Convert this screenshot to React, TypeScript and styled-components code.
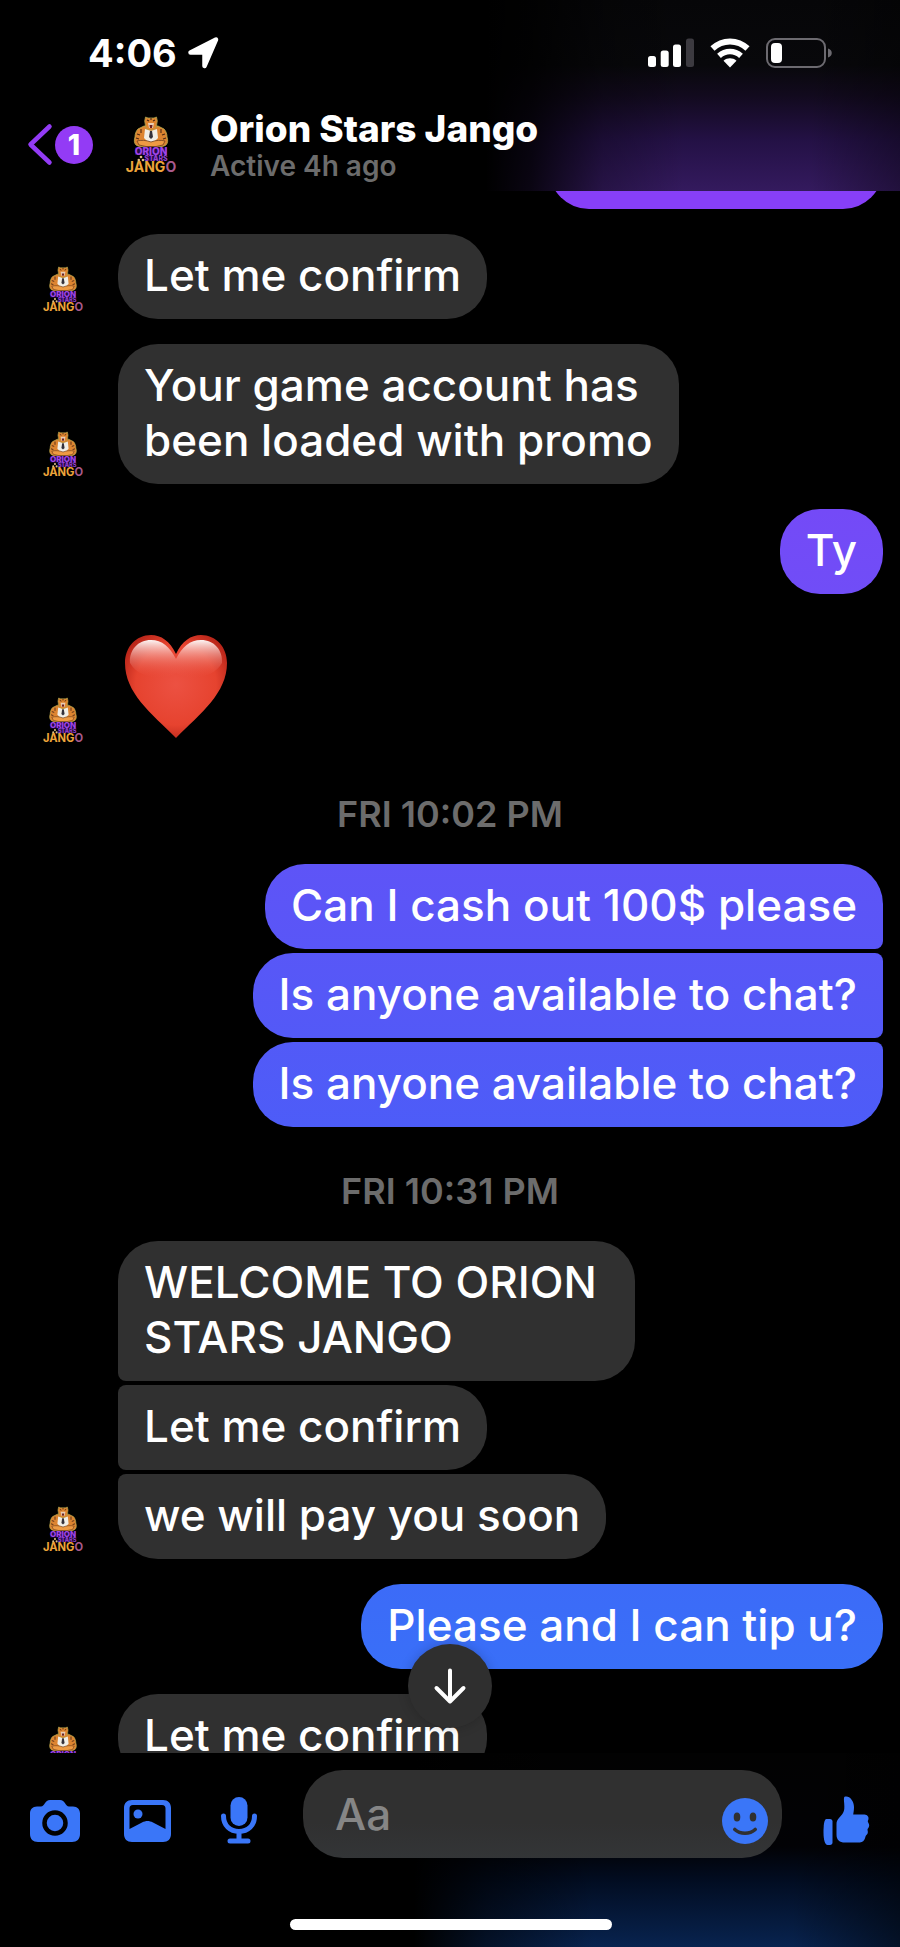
import React from "react";
import styled, { createGlobalStyle } from "styled-components";

const GlobalStyle = createGlobalStyle`
  * { box-sizing: border-box; }
  body {
    margin: 0;
    background: #000;
    color: #fff;
    font-family: Inter, "Liberation Sans", sans-serif;
  }
  button {
    border: 0;
    padding: 0;
    background: none;
    color: inherit;
    font: inherit;
    cursor: pointer;
  }
  svg { display: block; flex: none; overflow: visible; }
`;

const Screen = styled.div`
  display: flex;
  flex-direction: column;
  height: 100vh;
  overflow: hidden;
`;

const Header = styled.header`
  position: relative;
  z-index: 1;
  flex: none;
  background:
    linear-gradient(90deg, #000 54%, rgba(0, 0, 0, 0.8) 59%, rgba(0, 0, 0, 0.25) 67%, transparent 76%, transparent 90%, rgba(0, 0, 0, 0.35) 100%),
    linear-gradient(180deg, #060608 0%, #08080b 34%, #120a1e 50%, #241146 74%, #341a5e 100%);
`;

const StatusBar = styled.div`
  display: flex;
  align-items: center;
  justify-content: space-between;
  height: 106px;
  padding: 0 68px 0 88px;
`;

const StatusGroup = styled.div<{ $gap: number }>`
  display: flex;
  align-items: center;
  gap: ${(p) => p.$gap}px;
`;

const Clock = styled.time`
  font-size: 38px;
  line-height: 44px;
  font-weight: 700;
`;

const NavBar = styled.div`
  display: flex;
  align-items: center;
  height: 85px;
  padding: 0 24px 8px 28px;
`;

const BackButton = styled.button`
  display: flex;
  align-items: center;
  gap: 3px;
`;

const UnreadBadge = styled.span`
  width: 38px;
  height: 38px;
  border-radius: 50%;
  background: #933bf5;
  font-size: 28px;
  line-height: 38px;
  font-weight: 800;
  text-align: center;
`;

const Contact = styled.div`
  display: flex;
  align-items: center;
  gap: 34px;
  margin-left: 33px;
`;

const ContactName = styled.h1`
  margin: 0;
  font-size: 37px;
  line-height: 42px;
  font-weight: 800;
`;

const ContactStatus = styled.p`
  margin: 0;
  color: #6c6c6c;
  font-size: 28px;
  line-height: 32px;
  font-weight: 600;
`;

const Conversation = styled.main`
  position: relative;
  flex: 1;
  min-height: 0;
  overflow: hidden;
`;

const Thread = styled.div`
  display: flex;
  flex-direction: column;
  gap: 25px;
  margin-top: -67px;
  padding: 0 17px 0 43px;
`;

const Incoming = styled.div`
  display: flex;
  align-items: flex-end;
  gap: 35px;
`;

const AvatarSlot = styled.div`
  margin-bottom: 8px;
`;

const Stack = styled.div<{ $side: "left" | "right" }>`
  display: flex;
  flex-direction: column;
  align-items: ${(p) => (p.$side === "left" ? "flex-start" : "flex-end")};
  gap: 4px;
`;

type Place = "single" | "first" | "middle" | "last";

const corners = (side: "left" | "right", place: Place) => {
  const top = place === "middle" || place === "last" ? 8 : 40;
  const bottom = place === "middle" || place === "first" ? 8 : 40;
  return side === "left"
    ? `${top}px 40px 40px ${bottom}px`
    : `40px ${top}px ${bottom}px 40px`;
};

const Bubble = styled.p<{ $side: "left" | "right"; $place?: Place; $tone?: string }>`
  margin: 0;
  min-height: 85px;
  padding: 14px 26px 16px;
  border-radius: ${(p) => corners(p.$side, p.$place ?? "single")};
  background: ${(p) => p.$tone ?? "#303030"};
  font-size: 44px;
  line-height: 55px;
  font-weight: 500;
  white-space: pre-wrap;
`;

const ScrolledBubble = styled(Bubble)`
  width: 334px;
`;

const Reaction = styled.div`
  padding: 16px 0 12px 7px;
`;

const Timestamp = styled.time`
  padding: 17px 26px 3px 0;
  color: #6c6c6c;
  font-size: 36px;
  line-height: 44px;
  font-weight: 600;
  text-align: center;
`;

const JumpRow = styled.div`
  position: absolute;
  right: 0;
  bottom: 25px;
  left: 0;
  display: flex;
  justify-content: center;
`;

const JumpButton = styled.button`
  display: flex;
  align-items: center;
  justify-content: center;
  width: 84px;
  height: 84px;
  border-radius: 50%;
  background: #2f2f2f;
  box-shadow: 0 0 12px rgba(0, 0, 0, 0.2);
`;

const Footer = styled.footer`
  flex: none;
  padding: 17px 22px 17px 23px;
  background:
    linear-gradient(90deg, #000 46%, rgba(0, 0, 0, 0.5) 54%, transparent 66%, transparent 88%, rgba(0, 0, 0, 0.5) 100%),
    linear-gradient(180deg, #020202 0%, #020205 48%, #020d22 66%, #08234f 100%);
`;

const Composer = styled.form`
  display: flex;
  gap: 32px;
  height: 88px;
`;

const Tools = styled.div`
  display: flex;
  gap: 28px;
`;

const ToolButton = styled.button`
  display: flex;
  align-items: center;
  justify-content: center;
  width: 64px;
  padding-top: 13px;
  color: #3a76f8;
`;

const Field = styled.div`
  display: flex;
  flex: 1;
  min-width: 0;
  padding: 0 5px 0 32px;
  border-radius: 40px;
  background: linear-gradient(180deg, #303030 0%, #303030 60%, #333537 100%);
`;

const MessageInput = styled.input`
  flex: 1;
  min-width: 0;
  padding: 0;
  border: 0;
  outline: 0;
  background: none;
  color: #fff;
  font: 500 44px/88px Inter, "Liberation Sans", sans-serif;
  &::placeholder {
    color: #868686;
    opacity: 1;
  }
`;

const HomeIndicator = styled.div`
  width: 322px;
  max-width: 60%;
  height: 11px;
  margin: 61px auto 0;
  border-radius: 6px;
  background: #fff;
`;

function Mascot({ width, height }: { width: number; height: number }) {
  return (
    <svg width={width} height={height} viewBox="0 0 50 55" role="img" aria-label="Orion Stars Jango">
      <path d="M18 9l-6 3c-2 2-3 5-3 8-1 3-1 6 1 8 3 2 7 2 10 1h10c3 1 7 1 10-1 2-2 2-5 1-8 0-3-1-6-3-8l-6-3z" fill="#dd8430" stroke="#b9ad4f" strokeWidth=".8" />
      <path d="M19.500 0l2.500 1h6l2.500-1 .8 4-1 6-2.500 3h-5.600l-2.500-3-1-6z" fill="#e0852f" stroke="#a6a04c" strokeWidth=".8" />
      <path d="M21 3l2 1M29 3l-2 1M25 1v2M11 17l3 1M39 17l-3 1M10 21l3 1M40 21l-3 1M15 12v4M35 12v4" stroke="#4b2814" strokeWidth="1.100" />
      <path d="M22 6h6l-1 5h-4z" fill="#e9cdb4" />
      <path d="M23.500 8h3l-.5 3h-2z" fill="#6b2020" />
      <path d="M19 12l6 2 6-2 1 9-4 4h-6l-4-4z" fill="#f1eee6" />
      <path d="M24 14h2l1 6-2 2-2-2z" fill="#34323b" />
      <path d="M11 24c4-1 9-1 14 1 5-2 10-2 14-1l-2 4-7 1.500H20L13 28z" fill="#ee9a42" stroke="#70401e" strokeWidth=".8" />
      <path d="M9 30.500h32v7.500h-9v6H20v-6H9z" fill="#260a44" />
      <circle cx="15" cy="40" r="1.300" fill="#e0bd85" />
      <circle cx="12.800" cy="43" r="1.300" fill="#e0bd85" />
      <circle cx="17" cy="43" r="1.300" fill="#e0bd85" />
      <text fontWeight="800" textAnchor="middle">
        <tspan x="25" y="37.500" fontSize="10" fill="#a044ea">ORION</tspan>
        <tspan x="30" y="44" fontSize="7" fill="#9440d4">STARS</tspan>
        <tspan x="25" y="54.500" fontSize="14" fontWeight="700" fill="#eda43a">JANG</tspan>
        <tspan fontSize="14" fontWeight="700" fill="#a85a8d">O</tspan>
      </text>
    </svg>
  );
}

const SmallAvatar = () => (
  <AvatarSlot>
    <Mascot width={40} height={44} />
  </AvatarSlot>
);

const LocationIcon = () => (
  <svg width="32" height="32" viewBox="0 0 32 32" aria-hidden="true">
    <path d="M29 2.500L17.500 29V15.500H3.500z" fill="#fff" stroke="#fff" strokeWidth="4.500" strokeLinejoin="round" />
  </svg>
);

const SignalIcon = () => (
  <svg width="46" height="30" viewBox="0 0 46 30" aria-hidden="true">
    <rect x="0" y="18" width="8" height="11" rx="2.500" fill="#fff" />
    <rect x="12.700" y="12.500" width="8" height="16.500" rx="2.500" fill="#fff" />
    <rect x="25" y="6.500" width="8" height="22.500" rx="2.500" fill="#fff" />
    <rect x="38" y="0.500" width="8" height="28.500" rx="2.500" fill="#3c3a40" />
  </svg>
);

const WifiIcon = () => (
  <svg width="40" height="30" viewBox="0 0 40 30" aria-hidden="true">
    <path d="M2.500 10.500C12.500 1 27.500 1 37.500 10.500" fill="none" stroke="#fff" strokeWidth="6" />
    <path d="M9 17.800c6.500-5.800 15.500-5.800 22 0" fill="none" stroke="#fff" strokeWidth="5.600" />
    <path d="M20 29.500l-6.500-6.800c4-3.200 9-3.200 13 0z" fill="#fff" />
  </svg>
);

const BatteryIcon = () => (
  <svg width="66" height="30" viewBox="0 0 66 30" aria-hidden="true">
    <rect x="1" y="1" width="58" height="28" rx="8" fill="none" stroke="#6c6a70" strokeWidth="2" />
    <rect x="5" y="5" width="11" height="20" rx="4" fill="#fff" />
    <path d="M62 10.500c5 1.500 5 7.500 0 9z" fill="#6c6a70" />
  </svg>
);

const ChevronIcon = () => (
  <svg width="24" height="41" viewBox="0 0 24 41" aria-hidden="true">
    <path d="M21.500 2.500L2.500 20.500l19 18" fill="none" stroke="#933bf5" strokeWidth="4.500" strokeLinecap="round" strokeLinejoin="round" />
  </svg>
);

const HeartIcon = () => (
  <svg width="102" height="103" viewBox="0 0 102 103" role="img" aria-label="Red heart">
    <defs>
      <radialGradient id="heart-body" cx="50%" cy="48%" r="58%">
        <stop offset="0" stopColor="#ec5142" />
        <stop offset=".68" stopColor="#e6432f" />
        <stop offset="1" stopColor="#b82519" />
      </radialGradient>
      <linearGradient id="heart-shine" x1="0" y1="0" x2="0" y2="1">
        <stop offset="0" stopColor="#fff" stopOpacity=".95" />
        <stop offset=".5" stopColor="#f6aaa2" stopOpacity=".45" />
        <stop offset="1" stopColor="#ec5142" stopOpacity="0" />
      </linearGradient>
    </defs>
    <path d="M51 19C45 6 36 0 26 0 11 0 0 12 0 28c0 30 26 50 51 75 25-25 51-45 51-75C102 12 91 0 76 0 66 0 57 6 51 19z" fill="url(#heart-body)" />
    <path d="M26 5c11 0 19 7 25 19v14C38 46 14 44 5 28 4 15 13 5 26 5zM76 5c-11 0-19 7-25 19v14c13 8 37 6 46-10 1-13-8-23-21-23z" fill="url(#heart-shine)" />
  </svg>
);

const ArrowDownIcon = () => (
  <svg width="32" height="36" viewBox="0 0 32 36" aria-hidden="true">
    <path d="M16 2.500v30M2.500 20L16 33.500 29.500 20" fill="none" stroke="#fff" strokeWidth="4" strokeLinecap="round" strokeLinejoin="round" />
  </svg>
);

const CameraIcon = () => (
  <svg width="50" height="42" viewBox="0 0 50 42" aria-hidden="true">
    <path d="M7 6.500h4c3.500 0 4-6.500 9-6.500h10c5 0 5.500 6.500 9 6.500h4c4.500 0 7 3 7 7V34c0 5-3 8-8 8H8c-5 0-8-3-8-8V13.500c0-4 2.500-7 7-7z" fill="currentColor" />
    <circle cx="25" cy="23" r="10.500" fill="currentColor" stroke="#020202" strokeWidth="4.500" />
  </svg>
);

const PhotoIcon = () => (
  <svg width="47" height="42" viewBox="0 0 47 42" aria-hidden="true">
    <path fillRule="evenodd" d="M8 0h31c5 0 8 3 8 8v26c0 5-3 8-8 8H8c-5 0-8-3-8-8V8c0-5 3-8 8-8zm1 5C6.500 5 5.500 6.500 5.500 8.500V29L18 22.500c4-2 7-2 11 0L41.500 29V8.500c0-2-1-3.500-3.500-3.500z" fill="currentColor" />
    <circle cx="14" cy="14" r="4.500" fill="currentColor" />
  </svg>
);

const MicIcon = () => (
  <svg width="36" height="47" viewBox="0 0 36 47" aria-hidden="true">
    <rect x="9.500" y="0" width="17" height="29" rx="8.500" fill="currentColor" />
    <path d="M2.500 19c0 9.500 6.500 15.500 15.500 15.500s15.500-6 15.500-15.500M18 35v9M9 44h18" fill="none" stroke="currentColor" strokeWidth="5" strokeLinecap="round" />
  </svg>
);

const SmileIcon = () => (
  <svg width="46" height="46" viewBox="0 0 46 46" aria-hidden="true">
    <circle cx="23" cy="23" r="23" fill="currentColor" />
    <ellipse cx="15" cy="19" rx="3.300" ry="4.500" fill="#303030" />
    <ellipse cx="31" cy="19" rx="3.300" ry="4.500" fill="#303030" />
    <path d="M12.800 31.500c5.500 5 14.900 5 20.400 0" fill="none" stroke="#303030" strokeWidth="3.600" strokeLinecap="round" />
  </svg>
);

const ThumbIcon = () => (
  <svg width="46" height="50" viewBox="0 0 46 50" aria-hidden="true">
    <path d="M3.500 23h3.500c1.500 0 2.500 1 2.500 2.500v21c0 1.500-1 2.500-2.500 2.500H4.500C2 49 .5 44 .5 36.500.5 30 1 23 3.500 23z" fill="currentColor" />
    <path d="M21.500.8C26-1 31 4.500 31 11c0 3-.400 5-.800 7.500h10c3.500 0 5.500 1.500 5.300 4 0 1.500-.700 2-.700 3 .200 1 1.400 2 1.400 4s-1.700 3-1.700 4 .500 1.500.3 3.200c-.300 2-1.900 2.300-2.200 3.500-.300 1-.400 2-1.300 3.500-1.300 2.300-3.300 2.800-6.800 2.800H22c-5.500 0-8.500-2.500-8.500-8V28c0-5 4-7 6.500-11 1.500-2.500 1.500-5 1.200-9.500-.200-3-.700-6 .300-6.700z" fill="currentColor" />
  </svg>
);

export default function App() {
  return (
    <>
      <GlobalStyle />
      <Screen>
        <Header>
          <StatusBar>
            <StatusGroup $gap={10}>
              <Clock>4:06</Clock>
              <LocationIcon />
            </StatusGroup>
            <StatusGroup $gap={16}>
              <SignalIcon />
              <WifiIcon />
              <BatteryIcon />
            </StatusGroup>
          </StatusBar>
          <NavBar>
            <BackButton type="button" aria-label="Back, 1 unread">
              <ChevronIcon />
              <UnreadBadge>1</UnreadBadge>
            </BackButton>
            <Contact>
              <Mascot width={50} height={55} />
              <div>
                <ContactName>Orion Stars Jango</ContactName>
                <ContactStatus>Active 4h ago</ContactStatus>
              </div>
            </Contact>
          </NavBar>
        </Header>

        <Conversation>
          <Thread>
            <Stack $side="right">
              <ScrolledBubble $side="right" $tone="#873ff8" />
            </Stack>
            <Incoming>
              <SmallAvatar />
              <Bubble $side="left">Let me confirm</Bubble>
            </Incoming>
            <Incoming>
              <SmallAvatar />
              <Bubble $side="left">{"Your game account has\nbeen loaded with promo"}</Bubble>
            </Incoming>
            <Stack $side="right">
              <Bubble $side="right" $tone="linear-gradient(#744af7, #704df7)">Ty</Bubble>
            </Stack>
            <Incoming>
              <SmallAvatar />
              <Reaction>
                <HeartIcon />
              </Reaction>
            </Incoming>
            <Timestamp>FRI 10:02 PM</Timestamp>
            <Stack $side="right">
              <Bubble $side="right" $place="first" $tone="linear-gradient(#5e54f7, #5956f7)">
                Can I cash out 100$ please
              </Bubble>
              <Bubble $side="right" $place="middle" $tone="linear-gradient(#5857f7, #5359f7)">
                Is anyone available to chat?
              </Bubble>
              <Bubble $side="right" $place="last" $tone="linear-gradient(#525af7, #4d5cf8)">
                Is anyone available to chat?
              </Bubble>
            </Stack>
            <Timestamp>FRI 10:31 PM</Timestamp>
            <Incoming>
              <SmallAvatar />
              <Stack $side="left">
                <Bubble $side="left" $place="first">{"WELCOME TO ORION \nSTARS JANGO"}</Bubble>
                <Bubble $side="left" $place="middle">Let me confirm</Bubble>
                <Bubble $side="left" $place="last">we will pay you soon</Bubble>
              </Stack>
            </Incoming>
            <Stack $side="right">
              <Bubble $side="right" $tone="linear-gradient(#3c6bf8, #396ff8)">Please and I can tip u?</Bubble>
            </Stack>
            <Incoming>
              <SmallAvatar />
              <Bubble $side="left">Let me confirm</Bubble>
            </Incoming>
          </Thread>
          <JumpRow>
            <JumpButton type="button" aria-label="Jump to latest">
              <ArrowDownIcon />
            </JumpButton>
          </JumpRow>
        </Conversation>

        <Footer>
          <Composer>
            <Tools>
              <ToolButton type="button" aria-label="Camera">
                <CameraIcon />
              </ToolButton>
              <ToolButton type="button" aria-label="Photos">
                <PhotoIcon />
              </ToolButton>
              <ToolButton type="button" aria-label="Voice message">
                <MicIcon />
              </ToolButton>
            </Tools>
            <Field>
              <MessageInput type="text" aria-label="Message" placeholder="Aa" />
              <ToolButton type="button" aria-label="Emoji">
                <SmileIcon />
              </ToolButton>
            </Field>
            <ToolButton type="button" aria-label="Like">
              <ThumbIcon />
            </ToolButton>
          </Composer>
          <HomeIndicator />
        </Footer>
      </Screen>
    </>
  );
}
